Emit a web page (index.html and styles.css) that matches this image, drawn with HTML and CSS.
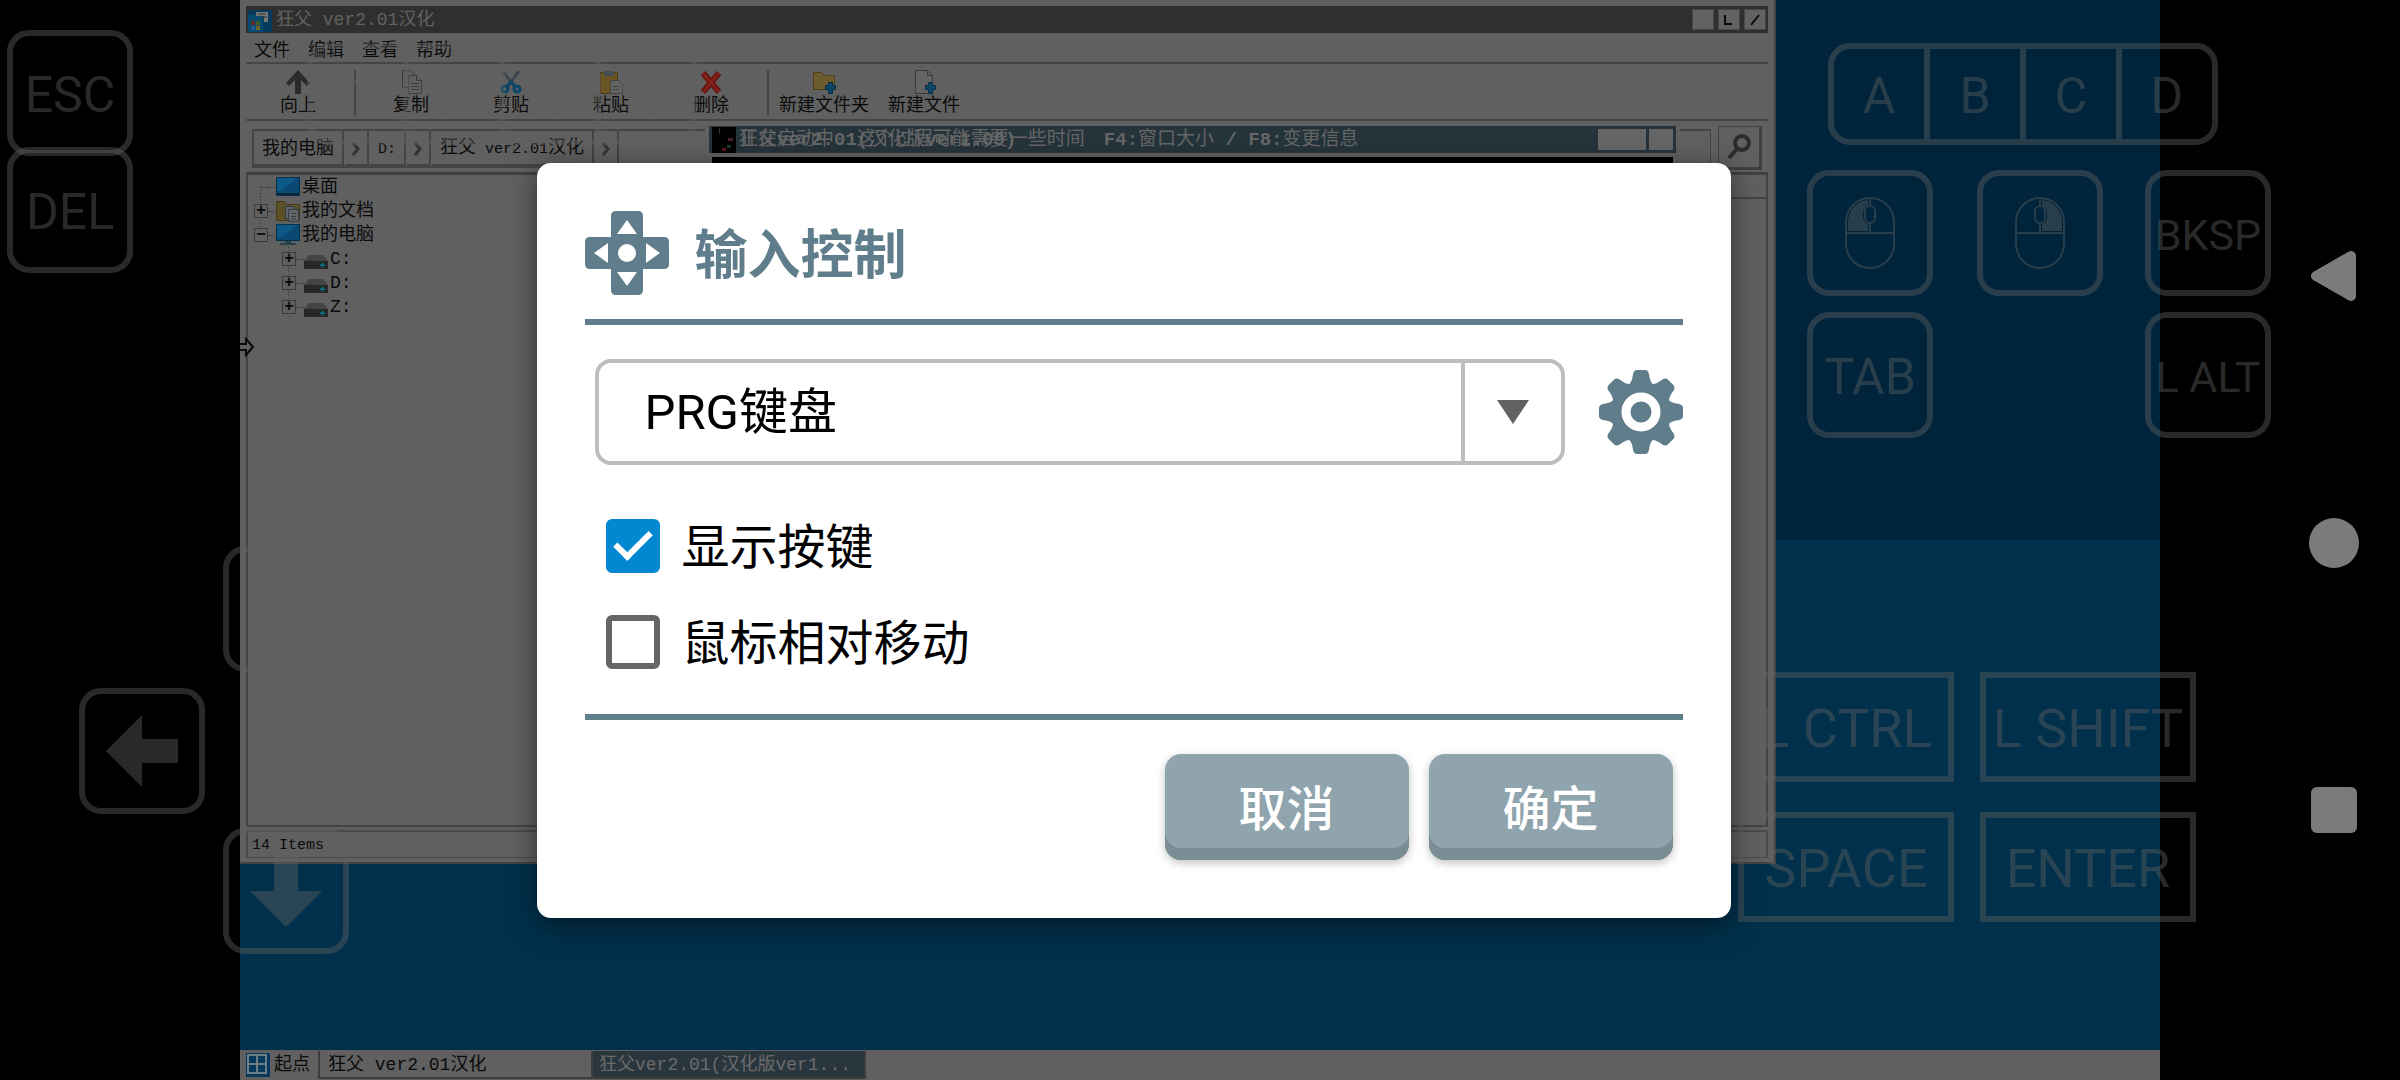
FILE: index.html
```html
<!DOCTYPE html>
<html lang="zh-CN">
<head>
<meta charset="utf-8">
<meta name="viewport" content="width=device-width, initial-scale=1">
<title>输入控制</title>
<link rel="stylesheet" href="styles.css">
</head>
<body>
<div class="device">
  <main class="desktop">
    <section class="window explorer">
      <header class="titlebar">
        <svg class="app-icon" viewBox="0 0 24 24"><path fill="#06395a" d="M0 2h24v22H0z"/><path fill="#08486f" d="M0 7h15v17H0z"/><path fill="#777" d="M8 4h12v10h-4V8H8z"/><path stroke="#333" d="M10 6h8M14 9h5"/><path fill="#63301f" d="M3 13h4v4H3z"/><path fill="#3d5f25" d="M8 13h4v4H8z"/><path fill="#1d5b88" d="M3 18h4v4H3z"/><path fill="#716425" d="M8 18h4v4H8z"/></svg>
        <h1 class="titlebar-text">狂父 ver2.01汉化</h1>
        <button class="win-btn" aria-label="最小化"></button>
        <button class="win-btn" aria-label="最大化"><svg viewBox="0 0 12 12"><path d="M2 1v9h7"/></svg></button>
        <button class="win-btn" aria-label="关闭"><svg viewBox="0 0 12 12"><path d="M2 11 10 1"/></svg></button>
      </header>
      <nav class="menubar"><a href="#file">文件</a><a href="#edit">编辑</a><a href="#view">查看</a><a href="#help">帮助</a></nav>
      <div class="toolbar">
        <button class="tool"><svg viewBox="0 0 24 24"><path fill="#2b2b2b" d="M12 0 24 13l-3 3-6-6v14H9V10l-6 6-3-3z"/></svg>向上</button>
        <span class="tool-sep"></span>
        <button class="tool"><svg viewBox="0 0 24 24" fill="#606060" stroke="#3c3c3c"><path d="M3.500.5h8l4 4v13h-12z"/><path d="M9.500 5.500h8l5 5v13h-13z"/><path d="M17.500 5.500v5h5M12 13.500h8M12 16.500h8M12 19.500h8"/></svg>复制</button>
        <button class="tool"><svg viewBox="0 0 24 24" fill="none"><path stroke="#3e474f" stroke-width="3" d="m4 1 11 15M20 1 9 16"/><g stroke="#0a4469" stroke-width="3"><circle cx="6" cy="19" r="3"/><circle cx="18" cy="19" r="3"/><path d="m12 11-4 6m4-6 4 6"/></g></svg>剪贴</button>
        <button class="tool"><svg viewBox="0 0 24 24"><path fill="#6b5522" stroke="#4a3a15" d="M1.500 2.500h17v21h-17z"/><path fill="#444e57" d="M5 1h10v5H5z"/><path fill="#646464" stroke="#444" d="M11.500 10.500h8l4 4v9h-12z"/><path stroke="#444" d="M14 16.500h7M14 19.500h7"/></svg>粘贴</button>
        <button class="tool"><svg viewBox="0 0 24 24"><path stroke="#65120f" stroke-width="6" d="m4 3 16 19M20 3 4 22"/><path stroke="#82201a" stroke-width="3" d="m4 3 16 19M20 3 4 22"/></svg>删除</button>
        <span class="tool-sep"></span>
        <button class="tool"><svg viewBox="0 0 24 24"><path fill="#6a5c2c" stroke="#4c3f1a" d="M1.500 2.500h8l2 3h11v14h-21z"/><path fill="#0c4668" stroke="#072f48" d="M16.500 12.500h4v3h3v4h-3v4h-4v-4h-3v-4h3z"/></svg>新建文件夹</button>
        <button class="tool"><svg viewBox="0 0 24 24"><path fill="#646464" stroke="#3c3c3c" d="M3.500.5h12l5 5v18h-17z"/><path fill="none" stroke="#3c3c3c" d="M15.500.5v5h5"/><path fill="#0c4668" stroke="#072f48" d="M16.500 12.500h4v3h3v4h-3v4h-4v-4h-3v-4h3z"/></svg>新建文件</button>
      </div>
      <div class="addressbar">
        <div class="path">
          <button class="crumb">我的电脑</button><button class="crumb arrow" aria-label="展开"><svg viewBox="0 0 10 16"><path d="m2 2 5 6-5 6"/></svg></button>
          <button class="crumb"><span class="latin">D:</span></button><button class="crumb arrow" aria-label="展开"><svg viewBox="0 0 10 16"><path d="m2 2 5 6-5 6"/></svg></button>
          <button class="crumb">狂父<span class="latin"> ver2.01</span>汉化</button><button class="crumb arrow" aria-label="展开"><svg viewBox="0 0 10 16"><path d="m2 2 5 6-5 6"/></svg></button>
        </div>
        <button class="search" aria-label="搜索"><svg viewBox="0 0 26 26"><circle cx="16" cy="9" r="7"/><path d="M11 15 3 24"/></svg></button>
      </div>
      <div class="panes">
        <ul class="tree">
          <li class="node first"><span class="stub"></span><span class="dots"></span><svg class="node-icon" viewBox="0 0 24 20"><path fill="#0a4a72" stroke="#062f49" d="M.5.500h23v18H.5z"/><path fill="#0d5a88" d="M1 1h20L4 14H1z"/><path stroke="#042438" stroke-width="2" d="M1 17h22"/></svg>桌面</li>
          <li class="node"><button class="toggle" aria-label="展开">+</button><span class="dots"></span><svg class="node-icon" viewBox="0 0 24 22"><path fill="#5c5027" stroke="#463b18" d="M.5 1.500h8l2 3h13v16H.5z"/><path fill="#5e646a" stroke="#333e48" d="M9.500 6.500h8v12h-8z"/><path fill="#646464" stroke="#333e48" d="M12.500 9.500h10v12h-10z"/><path stroke="#333e48" d="M15 13.500h5M15 16.500h5M15 19h5"/></svg>我的文档</li>
          <li class="node last"><button class="toggle" aria-label="折叠">−</button><span class="dots"></span><svg class="node-icon" viewBox="0 0 24 22"><path fill="#0a4a72" stroke="#062f49" d="M.5.500h23v16H.5z"/><path fill="#0d5a88" d="M1 1h20L6 13H1z"/><path fill="#29414e" d="M9 17h6v2h4l2 2H3l2-2h4z"/></svg>我的电脑</li>
          <li class="node child"><button class="toggle" aria-label="展开">+</button><span class="dots"></span><svg class="node-icon" viewBox="0 0 24 20"><path fill="#444" d="M5 6h14l5 6H0z"/><path fill="#272727" d="M0 12h24v8H0z"/><path stroke="#0d6470" stroke-width="2" d="M16 16h5M18.500 13.500v5"/></svg>C:</li>
          <li class="node child"><button class="toggle" aria-label="展开">+</button><span class="dots"></span><svg class="node-icon" viewBox="0 0 24 20"><path fill="#444" d="M5 6h14l5 6H0z"/><path fill="#272727" d="M0 12h24v8H0z"/><path stroke="#0d6470" stroke-width="2" d="M16 16h5M18.500 13.500v5"/></svg>D:</li>
          <li class="node child last"><button class="toggle" aria-label="展开">+</button><span class="dots"></span><svg class="node-icon" viewBox="0 0 24 20"><path fill="#444" d="M5 6h14l5 6H0z"/><path fill="#272727" d="M0 12h24v8H0z"/><path stroke="#0d6470" stroke-width="2" d="M16 16h5M18.500 13.500v5"/></svg>Z:</li>
        </ul>
        <div class="files"><div class="files-head"></div></div>
      </div>
      <footer class="statusbar"><span class="latin">14 Items</span></footer>
    </section>

    <section class="window game">
      <header class="game-title">
        <svg class="game-icon" viewBox="0 0 24 26"><path d="M0 0h24v26H0z"/><path fill="#4b2033" d="M16 11h5v3h-5z"/><path fill="#123d26" d="M15 18h4v3h-4z"/><path fill="#5a1a22" d="M10 21h4v3h-4z"/><path fill="#333" d="M7 1h1v6H7z"/></svg>
        <div class="game-caption"><span>狂父<b>ver2.01(</b>汉化版<b>ver1.09)</b></span><span>正在启动中<b>. </b>这个过程可能需要一些时间　<b>F4:</b>窗口大小<b> / F8:</b>变更信息</span></div>
        <button class="game-btn wide" aria-label="最小化"></button><button class="game-btn" aria-label="关闭"></button>
      </header>
      <div class="game-view"></div>
    </section>

    <svg class="cursor" viewBox="0 0 15 20"><path fill="#606060" stroke="#0a0a0a" stroke-width="2" d="M0 7h6V2l7 8-7 8v-5H0"/></svg>

    <footer class="taskbar">
      <button class="start"><svg viewBox="0 0 24 24"><path fill="#06395a" d="M0 0h24v24H0z"/><path fill="none" stroke="#6b7f8a" stroke-width="2" d="M2 2h18v18H2zM11 2v18M2 11h18"/></svg>起点</button>
      <button class="task">狂父 ver2.01汉化</button>
      <button class="task active">狂父ver2.01(汉化版ver1...</button>
    </footer>
  </main>

  <div class="pad">
    <button class="key square esc">ESC</button>
    <button class="key square del">DEL</button>
    <div class="strip numbers"><button>1</button><button>2</button><button>3</button><button>4</button></div>
    <div class="strip letters"><button>A</button><button>B</button><button>C</button><button>D</button></div>
    <button class="key square up" aria-label="上"><svg viewBox="0 0 72 72"><path d="M36 0 72 36H48v36H24V36H0z"/></svg></button>
    <button class="key square left" aria-label="左"><svg viewBox="0 0 72 72"><path d="M0 36 36 0v24h36v24H36v24z"/></svg></button>
    <button class="key square right" aria-label="右"><svg viewBox="0 0 72 72"><path d="M72 36 36 0v24H0v24h36v24z"/></svg></button>
    <button class="key square down" aria-label="下"><svg viewBox="0 0 72 72"><path d="M36 72 72 36H48V0H24v36H0z"/></svg></button>
    <button class="key square mouse-l" aria-label="鼠标左键"><svg class="mouse" viewBox="0 0 50 72"><rect x="1" y="1" width="48" height="70" rx="24"/><path d="M1 36h48M25 1v8M25 26v10"/><rect x="20" y="9" width="10" height="17" rx="5"/><path class="solid" d="M23 3v5c-3 1-5 4-5 8v4c0 4 2 6 5 7v7H3V24C4 12 12 4 23 3z"/></svg></button>
    <button class="key square mouse-r" aria-label="鼠标右键"><svg class="mouse" viewBox="0 0 50 72"><rect x="1" y="1" width="48" height="70" rx="24"/><path d="M1 36h48M25 1v8M25 26v10"/><rect x="20" y="9" width="10" height="17" rx="5"/><path class="solid" d="M27 3v5c3 1 5 4 5 8v4c0 4-2 6-5 7v7h20V24C46 12 38 4 27 3z"/></svg></button>
    <button class="key square small bksp">BKSP</button>
    <button class="key square tab">TAB</button>
    <button class="key square small alt">L ALT</button>
    <button class="key wide ctrl">L CTRL</button>
    <button class="key wide shift">L SHIFT</button>
    <button class="key wide space">SPACE</button>
    <button class="key wide enter">ENTER</button>
  </div>

  <div class="scrim">
    <form class="dialog" role="dialog" aria-labelledby="dialog-title">
      <header class="dialog-head">
        <svg viewBox="0 0 84 84"><path fill="#607d8b" d="M31 0h22q5 0 5 5v21h21q5 0 5 5v22q0 5-5 5H58v21q0 5-5 5H31q-5 0-5-5V58H5q-5 0-5-5V31q0-5 5-5h21V5q0-5 5-5z"/><g fill="#fff"><circle cx="42" cy="42" r="9"/><path d="m42 9 10 14H32zM42 75 32 61h20zM9 42l14-10v20zM75 42 61 52V32z"/></g></svg>
        <h2 id="dialog-title">输入控制</h2>
      </header>
      <div class="profile-row">
        <div class="combo">
          <select aria-label="键盘配置"><option>PRG键盘</option></select>
          <span class="combo-arrow"><svg viewBox="0 0 32 24"><path d="M0 0h32L16 24z"/></svg></span>
        </div>
        <button type="button" class="gear" aria-label="设置"><svg viewBox="-42 -42 84 84"><g fill="#607d8b"><circle r="30"/><g id="teeth"><path id="tooth" d="M-13-27Q-9-29-8-38-7-42-4-42H4Q7-42 8-38 9-29 13-27z"/><use href="#tooth" transform="rotate(45)"/><use href="#tooth" transform="rotate(90)"/><use href="#tooth" transform="rotate(135)"/></g><use href="#teeth" transform="rotate(180)"/></g><circle r="15" fill="none" stroke="#fff" stroke-width="9"/></svg></button>
      </div>
      <div class="options">
        <label><input type="checkbox" checked>显示按键</label>
        <label><input type="checkbox">鼠标相对移动</label>
      </div>
      <footer class="dialog-foot">
        <button type="button" class="action">取消</button>
        <button type="button" class="action">确定</button>
      </footer>
    </form>
  </div>

  <nav class="navbar">
    <button aria-label="返回"><svg viewBox="0 0 50 50"><path stroke="#7b7b7b" stroke-width="10" stroke-linejoin="round" d="M42 5v40L7 25z"/></svg></button>
    <button aria-label="主页"><svg viewBox="0 0 50 50"><circle cx="25" cy="25" r="25"/></svg></button>
    <button aria-label="最近任务"><svg viewBox="0 0 50 50"><rect x="2" y="2" width="46" height="46" rx="6"/></svg></button>
  </nav>
</div>
</body>
</html>
```
FILE: styles.css
```css
* { box-sizing: border-box; }

body {
  margin: 0;
  background: #000;
  font-family: Roboto, "Noto Sans CJK SC", sans-serif;
}

button {
  margin: 0;
  padding: 0;
  border: 0;
  background: none;
  color: inherit;
  font: inherit;
}

svg { display: block; }

.device {
  position: relative;
  display: grid;
  grid-template-columns: 10% 80% 10%;
  min-height: 100vh;
  overflow: hidden;
}

/* Emulated desktop */
.desktop {
  grid-column: 2;
  position: relative;
  display: flex;
  flex-direction: column;
  justify-content: flex-end;
  overflow: hidden;
  background: linear-gradient(#00243b 50%, #00304b 50%);
  color: #0a0a0a;
  font-family: "Liberation Mono", "Noto Sans CJK SC", monospace;
  font-size: 18px;
  line-height: 24px;
  white-space: nowrap;
}

.latin { font-size: 15px; }

.window {
  position: absolute;
  display: flex;
  flex-direction: column;
  background: #606060;
}

.explorer {
  top: 0;
  left: 0;
  width: 80%;
  height: 80%;
  padding: 6px 6px 4px;
  border: solid #434343;
  border-width: 0 2px 2px 0;
}

.titlebar {
  display: flex;
  align-items: center;
  gap: 4px;
  height: 27px;
  padding: 0 2px;
  background: #2f2f2f;
  color: #626262;
}

.app-icon { width: 24px; height: 24px; }

.titlebar-text {
  flex: 1;
  margin: 0;
  font-size: 18px;
  font-weight: 400;
}

.win-btn {
  display: grid;
  place-items: center;
  width: 22px;
  height: 21px;
  border: 1px solid #464646;
  background: #626262;
}

.win-btn svg { width: 12px; fill: none; stroke: #0a0a0a; stroke-width: 2; }

.menubar {
  display: flex;
  gap: 18px;
  height: 31px;
  padding: 6px 8px 0;
  border-bottom: 2px solid #454545;
}

.menubar a { color: inherit; text-decoration: none; }

.toolbar {
  display: flex;
  height: 57px;
  padding: 6px 2px 0;
  border-bottom: 2px solid #454545;
}

.tool {
  display: flex;
  flex-direction: column;
  align-items: center;
  width: 100px;
}

.tool svg { width: 24px; height: 24px; }

.tool-sep {
  width: 2px;
  height: 46px;
  margin: 0 5px 0 6px;
  background: #454545;
}

.addressbar {
  display: flex;
  gap: 7px;
  height: 53px;
  padding: 5px 6px 2px;
  border-bottom: 2px solid #3f3f3f;
}

.path {
  flex: 1;
  display: flex;
  gap: 1px;
  height: 39px;
  margin-top: 3px;
  border: solid #444;
  border-width: 2px 1px 2px 2px;
}

.crumb {
  padding: 2px 8px 0;
  border: solid #444;
  border-width: 0 2px 2px 0;
}

.crumb.arrow { padding: 2px 6px 0; }
.crumb svg { width: 10px; fill: none; stroke: #333; stroke-width: 3; }

.search {
  display: grid;
  place-items: center;
  width: 44px;
  border: solid #404040;
  border-width: 1px 3px 3px 1px;
}

.search svg { width: 26px; fill: none; stroke: #2c2c2c; stroke-width: 4; }

.panes {
  flex: 1;
  display: flex;
  border: solid #444;
  border-width: 1px 2px 2px;
}

.tree {
  display: flex;
  flex-direction: column;
  width: 24%;
  margin: 0;
  padding: 0 6px;
  list-style: none;
}

/* Dotted guide that joins a row to its neighbours */
.node {
  display: flex;
  align-items: center;
  height: 24px;
  background: repeating-linear-gradient(#333 0 1px, transparent 1px 3px) 6px 0 / 1px 100% no-repeat;
}

.node.first { background-position: 6px 100%; background-size: 1px 50%; }
.node.last { background-size: 1px 50%; }
.node.child { padding-left: 28px; background-position: 34px 0; }
.node-icon { width: 24px; height: 22px; margin-right: 2px; }

.toggle {
  width: 14px;
  height: 14px;
  border: 1px solid #3a3a3a;
  background: #606060;
  font-size: 16px;
  font-weight: 700;
  line-height: 10px;
}

.dots { width: 8px; border-top: 1px dotted #333; }
.stub { width: 8px; margin-left: 6px; border-top: 1px dotted #333; }

.files { flex: 1; }
.files-head { height: 24px; border-bottom: 2px solid #444; }

.statusbar {
  display: flex;
  align-items: center;
  height: 28px;
  margin-top: 3px;
  padding: 2px 4px 0;
  border: solid #4a4a4a;
  border-width: 2px 2px 1px;
}

.game {
  top: 121px;
  left: 465px;
  width: 975px;
  height: 560px;
  padding: 5px 4px;
}

.game-title {
  display: flex;
  align-items: center;
  gap: 3px;
  height: 27px;
  padding: 0 3px;
  background: #25333b;
  color: #666;
}

.game-icon { width: 24px; height: 26px; }
.game-caption { flex: 1; display: grid; font-size: 19px; }
.game-caption span { grid-area: 1 / 1; }
.game-btn { width: 24px; height: 21px; background: #656565; }
.game-btn.wide { width: 48px; }
.game-view { flex: 1; margin: 4px 3px 0; background: #000; }

.cursor { position: absolute; top: 337px; left: 0; width: 15px; height: 20px; }

.taskbar {
  display: flex;
  height: 30px;
  padding: 1px 6px;
  background: #606060;
}

.start {
  display: flex;
  align-items: center;
  gap: 4px;
  width: 74px;
  border-right: 2px solid #3d3d3d;
}

.start svg { width: 24px; height: 24px; }

.task {
  width: 273px;
  padding: 2px 8px 0;
  border: solid #3d3d3d;
  border-width: 0 2px 2px 0;
  text-align: left;
}

.task.active { padding: 2px 6px 0; background: #29363d; color: #6b6b6b; }

/* Touch keys floating over the screen */
.pad {
  position: absolute;
  inset: 0;
  color: #626262;
}

.key, .strip { position: absolute; opacity: .42; }

.key {
  display: grid;
  place-items: center;
  padding-top: 4px;
  border: 6px solid #626262;
  line-height: 62px;
  white-space: nowrap;
}

.key:has(svg) { padding-top: 0; }

.square { width: 126px; height: 126px; border-radius: 22px; font-size: 50px; }
.small { font-size: 43px; }
.wide.key { width: 216px; height: 110px; font-size: 54px; }

.key svg { width: 72px; fill: #626262; }
.key .mouse { width: 50px; fill: none; stroke: #626262; stroke-width: 2; }
.mouse .solid { fill: #626262; stroke: none; }

.strip {
  display: grid;
  grid-template-columns: 90px 96px 96px 96px;
  top: 43px;
  width: 390px;
  height: 102px;
  border: 6px solid #626262;
  border-radius: 22px;
  font-size: 50px;
}

.strip button { padding-top: 4px; }
.strip button + button { border-left: 6px solid #626262; }

.esc { top: 30px; left: 7px; }
.del { top: 147px; left: 7px; }
.numbers { left: 307px; }
.letters { right: 182px; }
.up { bottom: 408px; left: 223px; }
.left { bottom: 266px; left: 79px; }
.right { bottom: 266px; left: 369px; }
.down { bottom: 126px; left: 223px; }
.mouse-l { top: 170px; right: 467px; }
.mouse-r { top: 170px; right: 297px; }
.bksp { top: 170px; right: 129px; }
.tab { top: 312px; right: 467px; }
.alt { top: 312px; right: 129px; }
.ctrl { right: 446px; bottom: 298px; }
.shift { right: 204px; bottom: 298px; }
.space { right: 446px; bottom: 158px; }
.enter { right: 204px; bottom: 158px; }

/* Dialog */
.scrim {
  position: absolute;
  inset: 0 133px 0 0;
  display: grid;
  place-items: center;
}

.dialog {
  width: 1194px;
  max-width: 100%;
  padding: 48px;
  padding-bottom: 58px;
  border-radius: 14px;
  background: #fff;
  box-shadow: 0 6px 28px rgba(0, 0, 0, .5);
  color: #000;
  font-size: 48px;
}

.dialog-head {
  display: flex;
  align-items: flex-start;
  gap: 26px;
  padding-bottom: 18px;
  border-bottom: 6px solid #607d8b;
}

.dialog-head svg { width: 84px; height: 84px; }

.dialog-head h2 {
  margin: 0;
  color: #607d8b;
  font-size: 53px;
  font-weight: 700;
  line-height: 90px;
}

.profile-row {
  display: flex;
  align-items: center;
  gap: 34px;
  padding: 34px 0 54px 10px;
}

.combo { position: relative; flex: 1; }

.combo select {
  display: block;
  width: 100%;
  height: 106px;
  padding: 2px 110px 0 46px;
  border: 4px solid #bdbdbd;
  border-radius: 16px;
  background: #fff;
  color: #000;
  font: inherit;
  font-size: 49px;
  appearance: none;
}

.combo-arrow {
  position: absolute;
  inset: 4px 4px 4px auto;
  display: grid;
  place-items: center;
  width: 100px;
  border-left: 4px solid #bdbdbd;
  pointer-events: none;
}

.combo-arrow svg { width: 32px; fill: #616161; }

.gear svg { width: 84px; height: 84px; }

.options {
  display: grid;
  gap: 42px;
  padding: 0 21px 45px;
  border-bottom: 6px solid #607d8b;
}

.options label {
  display: flex;
  gap: 22px;
  height: 54px;
  line-height: 58px;
}

.options input {
  width: 54px;
  height: 54px;
  margin: 0;
  border: 6px solid #666;
  border-radius: 6px;
  appearance: none;
}

.options input:checked {
  border-color: #0288d1;
  background: #0288d1;
}

.options input:checked::before {
  content: "";
  display: block;
  width: 14px;
  height: 30px;
  margin: -2px auto 0;
  border: solid #fff;
  border-width: 0 6px 6px 0;
  transform: rotate(45deg);
}

.dialog-foot {
  display: flex;
  justify-content: flex-end;
  gap: 20px;
  padding: 34px 10px 0;
}

.action {
  width: 244px;
  height: 106px;
  padding-bottom: 4px;
  border-radius: 16px;
  background: #90a4ae;
  box-shadow: inset 0 -12px #7a8c94, 0 3px 8px rgba(0, 0, 0, .25);
  color: #fff;
  font-weight: 500;
}

/* System navigation */
.navbar {
  position: absolute;
  inset: 0 0 0 auto;
  display: flex;
  flex-direction: column;
  justify-content: center;
  align-items: center;
  gap: 217px;
  width: 133px;
  padding-top: 6px;
}

.navbar svg { width: 50px; height: 50px; fill: #7b7b7b; }
```
